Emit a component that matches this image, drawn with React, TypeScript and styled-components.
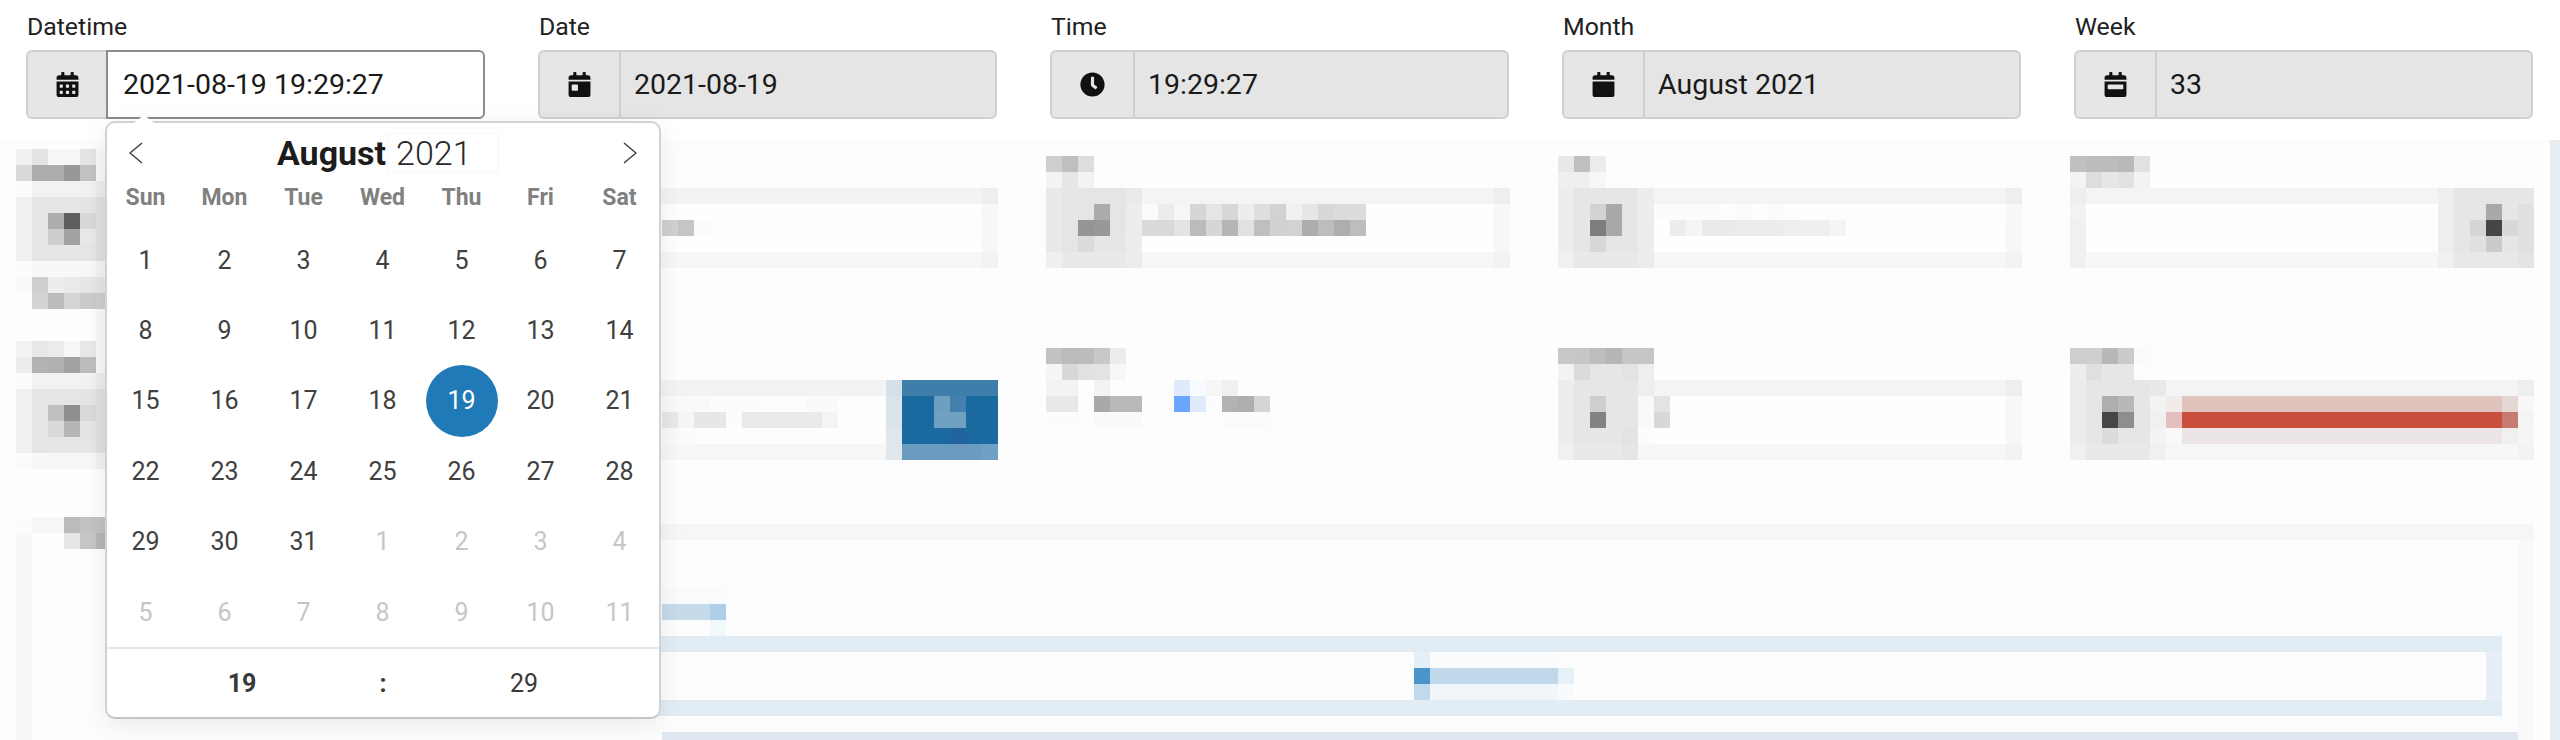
import React from "react";
import styled, { createGlobalStyle } from "styled-components";
import { FaCalendar, FaCalendarAlt, FaCalendarDay, FaCalendarWeek, FaClock } from "react-icons/fa";

const GlobalStyle = createGlobalStyle`
  html, body {
    margin: 0;
    padding: 0;
    background: #fff;
    overflow: hidden;
  }
  body {
    font-family: Roboto, "Liberation Sans", sans-serif;
    color: #212121;
  }
`;

const WEEKDAYS = ["Sun", "Mon", "Tue", "Wed", "Thu", "Fri", "Sat"];
const DAYS = [
  1, 2, 3, 4, 5, 6, 7, 8, 9, 10, 11, 12, 13, 14, 15, 16, 17, 18, 19, 20, 21,
  22, 23, 24, 25, 26, 27, 28, 29, 30, 31,
];
const NEXT_DAYS = [1, 2, 3, 4, 5, 6, 7, 8, 9, 10, 11];

// pixelated parts of the page. "f5" is a grey, "f5*3" repeats it, 6 digits is a full colour
const LEFT_FIELDS = [
  "f0 e4 f7 f6 e4 f8",
  "d9 ad ac 98 c2 f7",
  "fb f2 f2 f2 f2 ec",
  "f0 e5 e5 e5 e5 df",
  "f0 e5 ad 5e d8 df",
  "f0 e5 cd a2 e8 df",
  "f0 e5 e6 e6 e6 df",
  "fc f8 f8 f8 f8 f2",
  "fa cf ed ea e7 e5",
  "fd d3 bc d5 cb ce",
  "fe*5 f8",
  "fe*5 f8",
  "f3 e8 ec f7 e8 f8",
  "ed b2 b0 a1 bd f7",
  "fb f2 f2 f2 f2 ec",
  "f0 e5 e5 e5 e5 df",
  "f0 e5 c0 8e da df",
  "f0 e5 da b6 e5 df",
  "f0 e5 e6 e6 e6 df",
  "fb f7 f7 f7 f7 f0",
];

const DATE_FIELD = ["", "", "f3*28 ee", "fe*28 f7", "fd*8 d0 c6 fb fd*17 f7", "fe*28 f7", "f7*28 f2"];
const BLUE_FIELD = [
  "",
  "",
  "f3*22 d6e0e8 3f7eab*6",
  "fd*8 f9 f9 f9 fc fc fc fd fd fd fa fa fd*3 d9e3ea 1b6a9f*2 6d9fc1 4480ad 1b6a9f*2",
  "fd*8 e8 f6 e7 e7 fc ea*5 f4 fd*3 d9e3ea 1b6a9f*2 70a0c2*2 1b6a9f*2",
  "fd*8 f9 fc fd*12 dfe7ed 1b6a9f*3 22639b 1b6a9f*2",
  "f7*22 e0e8ee 6a9cc0*5 70a0c4",
];
const TIME_FIELD = [
  "cf bf dd",
  "f3 e6 f3",
  "e9 e5*4 ea f4*22 ee",
  "e9 e5 e5 ab e5 ed fb ec f6 d6 e5 d7 ed de d2 f0 e6 d8 dc dc fe*8 f7",
  "e9 e5 95 98 e5 ed d9 d9 e3 bb d6 b5 e1 bf d1 d2 ad bd ae bd fe*8 f7",
  "e9 e5 dc e6 e6 ed fe*22 f7",
  "ef e9*4 ec f7*22 f2",
];
const STATUS_FIELD = [
  "c2 bb bc c8 ec",
  "f5 d8 e1 e3 f7",
  "f3 f3 fd f3 fd*4 dfebfb f8fbff f6 f0",
  "e8 e8 fd a9 b9 b9 fd fd 6aa6ff dfebfb fc b2 ae d5",
  "fc fc fd fa fa fa fd*5 fb fb fb",
];
const MONTH_FIELD = [
  "e8 c0 ec",
  "ef ef f7",
  "ed e6*4 ed f4*22 ee",
  "ed e6 d2 a9 e6 ed fc fc fc fb fd fb fd fb fd*14 f7",
  "ed e6 7d a8 e6 ed fe ed f5 ea ea ec ec ec ee ef ef f5 fe*10 f7",
  "ed e6 d8 e6 e6 ed fe*22 f7",
  "f0 e9*4 ec f7*22 f2",
];
const RANGE_FIELD = [
  "c8 c6 bd b6 c6 c6",
  "f3 db e6 e6 e3 ee",
  "ed e6*4 ee f4*22 ee",
  "ed e6 ce e6 e6 f9 e3 fe*21 f7",
  "ed e6 83 e6 e6 f9 d8 fe*21 f7",
  "ed e6*3 e3 fc fe*22 f7",
  "f0 e9*3 e6 f7*23 f2",
];
const WEEK_FIELD = [
  "c0 bc bc b9 e2",
  "f3 dd e6 e2 f3",
  "ee f4*22 ee e6*5",
  "f2 fe*22 ee e6 e6 a8 e6 e0",
  "f0 fe*22 ee e6 d5 45 d8 e0",
  "f0 fe*22 ee e6 e0 cb e6 e0",
  "f0 f7*22 f0 e8*4 e4",
];
const ERROR_FIELD = [
  "ce cf b8 ca fb",
  "ed df e6 e6 fd",
  "ec e6*4 e9 f4*22 ee",
  "ec e6 ae b8 e6 f3 f1ebe9 e1c3be*20 e4d7d4 f7",
  "ec e6 46 8e e6 f0 e3bfbf c94e3c*20 c77c72 f4",
  "ec e6 dc e6 e6 f3 f9 ebe6e5*20 f0 f5",
  "f0 e9*4 f0 f7*22 f3",
];

// lower part of the page, in page coordinates: x, y, width, height, colour
const PANEL_ORIGIN = { x: 16, y: 517 };
const PANEL_TILES: [number, number, number, number, string][] = [
  [16, 517, 16, 16, "#fcfcfc"],
  [32, 517, 32, 16, "#f7f7f7"],
  [64, 517, 16, 16, "#bbb"],
  [80, 517, 32, 16, "#c2c2c2"],
  [16, 533, 16, 207, "#f8f8f8"],
  [64, 533, 16, 16, "#e6e6e6"],
  [80, 533, 16, 16, "#c6c6c6"],
  [96, 533, 16, 16, "#b5b5b5"],
  [112, 524, 2422, 16, "#f6f6f6"],
  [2518, 540, 16, 200, "#fafafa"],
  [662, 588, 64, 16, "#f9fbfc"],
  [662, 604, 48, 16, "#c5dbea"],
  [710, 604, 16, 16, "#b0cfe6"],
  [710, 620, 16, 16, "#f3f8fb"],
  [112, 636, 2390, 16, "#e2ecf5"],
  [112, 700, 2390, 16, "#e2ecf5"],
  [2486, 652, 16, 48, "#e6eff7"],
  [1414, 652, 16, 16, "#e4eff7"],
  [1430, 652, 128, 16, "#fafcfe"],
  [1414, 668, 16, 16, "#4a96cb"],
  [1430, 668, 128, 16, "#bfd8ea"],
  [1558, 668, 16, 16, "#e6f0f7"],
  [1414, 684, 16, 16, "#c0d9ec"],
  [1430, 684, 128, 16, "#f0f6fa"],
  [1558, 684, 16, 16, "#f8fafc"],
  [662, 732, 1856, 8, "#dfe8f1"],
];

const parseRow = (row: string) =>
  row
    .split(" ")
    .filter(Boolean)
    .flatMap((token) => {
      const [hex, count] = token.split("*");
      const colour = hex.length === 2 ? `#${hex}${hex}${hex}` : `#${hex}`;
      return Array<string>(Number(count || 1)).fill(colour);
    });

function Mosaic({ rows }: { rows: string[] }) {
  const parsed = rows.map(parseRow);
  const columns = Math.max(...parsed.map((r) => r.length));
  return (
    <MosaicSvg width={columns * 16} height={parsed.length * 16} shapeRendering="crispEdges">
      {parsed.map((row, y) =>
        row.map((fill, x) => <rect key={`${x}-${y}`} x={x * 16} y={y * 16} width={16} height={16} fill={fill} />)
      )}
    </MosaicSvg>
  );
}

function Chevron({ flip }: { flip?: boolean }) {
  return (
    <svg width="14" height="22" viewBox="0 0 14 22">
      <polyline
        points={flip ? "1,1 13,11 1,21" : "13,1 1,11 13,21"}
        fill="none"
        stroke="#3a3a3a"
        strokeWidth="1.4"
      />
    </svg>
  );
}

function Calendar() {
  return (
    <Popover>
      <NavRow>
        <Chevron />
        <MonthTitle>
          <MonthName>August</MonthName>
          <YearBox>2021</YearBox>
        </MonthTitle>
        <Chevron flip />
      </NavRow>
      <WeekRow>
        {WEEKDAYS.map((d) => (
          <WeekDay key={d}>{d}</WeekDay>
        ))}
      </WeekRow>
      <DayGrid>
        {DAYS.map((d) => (
          <DayCell key={d}>
            <Day $selected={d === 19}>{d}</Day>
          </DayCell>
        ))}
        {NEXT_DAYS.map((d) => (
          <DayCell key={`next-${d}`}>
            <Day $muted>{d}</Day>
          </DayCell>
        ))}
      </DayGrid>
      <TimeRow>
        <TimePart $bold>19</TimePart>
        <TimePart $bold>:</TimePart>
        <TimePart>29</TimePart>
      </TimeRow>
    </Popover>
  );
}

export default function App() {
  return (
    <Page>
      <GlobalStyle />
      <TopRow>
        <Field>
          <Label>Datetime</Label>
          <InputGroup>
            <Addon $width={80}>
              <FaCalendarAlt />
            </Addon>
            <InputBox $focused>2021-08-19 19:29:27</InputBox>
            <Calendar />
          </InputGroup>
        </Field>
        <Field>
          <Label>Date</Label>
          <InputGroup>
            <Addon>
              <FaCalendarDay />
            </Addon>
            <InputBox>2021-08-19</InputBox>
          </InputGroup>
        </Field>
        <Field>
          <Label>Time</Label>
          <InputGroup>
            <Addon $width={83}>
              <FaClock />
            </Addon>
            <InputBox>19:29:27</InputBox>
          </InputGroup>
        </Field>
        <Field>
          <Label>Month</Label>
          <InputGroup>
            <Addon>
              <FaCalendar />
            </Addon>
            <InputBox>August 2021</InputBox>
          </InputGroup>
        </Field>
        <Field>
          <Label>Week</Label>
          <InputGroup>
            <Addon>
              <FaCalendarWeek />
            </Addon>
            <InputBox>33</InputBox>
          </InputGroup>
        </Field>
      </TopRow>
      <Blurred>
        <BlurredMain>
          <BlurredGrid>
            <LeftColumn>
              <Mosaic rows={LEFT_FIELDS} />
            </LeftColumn>
            <BlurredColumn>
              <Mosaic rows={DATE_FIELD} />
              <Mosaic rows={BLUE_FIELD} />
            </BlurredColumn>
            <BlurredColumn>
              <Mosaic rows={TIME_FIELD} />
              <Mosaic rows={STATUS_FIELD} />
            </BlurredColumn>
            <BlurredColumn>
              <Mosaic rows={MONTH_FIELD} />
              <Mosaic rows={RANGE_FIELD} />
            </BlurredColumn>
            <BlurredColumn>
              <Mosaic rows={WEEK_FIELD} />
              <Mosaic rows={ERROR_FIELD} />
            </BlurredColumn>
          </BlurredGrid>
          <PanelSvg width={2518} height={223} shapeRendering="crispEdges">
            {PANEL_TILES.map(([x, y, w, h, fill]) => (
              <rect
                key={`${x}-${y}`}
                x={x - PANEL_ORIGIN.x}
                y={y - PANEL_ORIGIN.y}
                width={w}
                height={h}
                fill={fill}
              />
            ))}
          </PanelSvg>
        </BlurredMain>
        <EdgeStrip />
      </Blurred>
    </Page>
  );
}

const Page = styled.div`
  width: 2560px;
  height: 740px;
  overflow: hidden;
`;

const TopRow = styled.div`
  display: grid;
  grid-template-columns: repeat(5, 459px);
  column-gap: 53px;
  height: 140px;
  padding-left: 26px;
  box-sizing: border-box;
`;

const Field = styled.div`
  display: flex;
  flex-direction: column;
`;

const Label = styled.label`
  height: 50px;
  padding: 12px 0 0 1px;
  box-sizing: border-box;
  font-size: 24.8px;
  line-height: 30px;
  color: #212121;
`;

const InputGroup = styled.div`
  position: relative;
  display: flex;
  height: 69px;
`;

const Addon = styled.div<{ $width?: number }>`
  flex: 0 0 ${(p) => p.$width || 81}px;
  display: flex;
  align-items: center;
  justify-content: center;
  box-sizing: border-box;
  border: 2px solid #d0d0d0;
  border-right: 0;
  border-radius: 6px 0 0 6px;
  background: #e6e6e6;
  font-size: 25px;
  color: #111;
`;

const InputBox = styled.div<{ $focused?: boolean }>`
  flex: 1;
  display: flex;
  align-items: center;
  padding-left: ${(p) => (p.$focused ? 15 : 13)}px;
  box-sizing: border-box;
  border: 2px solid ${(p) => (p.$focused ? "#8c8c8c" : "#cfcfcf")};
  border-radius: 0 6px 6px 0;
  background: ${(p) => (p.$focused ? "#fff" : "#e5e5e5")};
  font-size: 28.5px;
  color: #1a1a1a;
`;

const Popover = styled.div`
  position: absolute;
  z-index: 5;
  top: 71px;
  left: 79px;
  width: 556px;
  height: 598px;
  box-sizing: border-box;
  display: flex;
  flex-direction: column;
  border: 2px solid #d2d2d2;
  border-bottom-color: #c4c4c4;
  border-radius: 10px;
  background: #fff;
  box-shadow: 0 6px 26px rgba(0, 0, 0, 0.08);

  &::before {
    content: "";
    position: absolute;
    top: -8px;
    left: 27px;
    border-style: solid;
    border-width: 0 10px 8px;
    border-color: transparent transparent #fff;
  }
`;

const NavRow = styled.div`
  flex: 0 0 59px;
  display: flex;
  align-items: center;
  justify-content: space-between;
  padding: 0 22px;
`;

const MonthTitle = styled.div`
  display: flex;
  align-items: center;
  margin-left: 10px;
  font-size: 34px;
`;

const MonthName = styled.span`
  font-weight: 700;
  color: #1c1c1c;
`;

const YearBox = styled.span`
  width: 112px;
  height: 40px;
  margin-left: 1px;
  padding-left: 8px;
  box-sizing: border-box;
  border: 1px solid #f7f7f7;
  font-weight: 300;
  line-height: 38px;
  color: #2a2a2a;
`;

const WeekRow = styled.div`
  flex: 0 0 30px;
  display: grid;
  grid-template-columns: repeat(7, 79px);
  margin: 1px 0 12px -1px;
`;

const WeekDay = styled.span`
  text-align: center;
  font-size: 23px;
  font-weight: 700;
  line-height: 30px;
  color: #808080;
`;

const DayGrid = styled.div`
  display: grid;
  grid-template-columns: repeat(7, 79px);
  grid-auto-rows: 70.4px;
  padding-left: 0;
  border-bottom: 2px solid #e6e6e6;
`;

const DayCell = styled.div`
  display: flex;
  align-items: center;
  justify-content: center;
  transform: translateX(-1px);
`;

const Day = styled.span<{ $selected?: boolean; $muted?: boolean }>`
  flex: 0 0 72px;
  height: 72px;
  display: flex;
  align-items: center;
  justify-content: center;
  border-radius: 50%;
  font-size: 25px;
  background: ${(p) => (p.$selected ? "#217ab8" : "transparent")};
  color: ${(p) => (p.$selected ? "#fff" : p.$muted ? "#c6c6c6" : "#404040")};
`;

const TimeRow = styled.div`
  flex: 1;
  display: grid;
  grid-template-columns: repeat(3, 141px);
  justify-content: center;
  align-items: center;
  justify-items: center;
`;

const TimePart = styled.span<{ $bold?: boolean }>`
  font-size: 25px;
  font-weight: ${(p) => (p.$bold ? 700 : 400)};
  color: #393939;
`;

const Blurred = styled.div`
  display: flex;
  height: 600px;
  background: #fdfdfd;
`;

const BlurredMain = styled.div`
  flex: 0 0 2550px;
  padding-left: 16px;
  box-sizing: border-box;
`;

const BlurredGrid = styled.div`
  display: grid;
  grid-template-columns: 518px 512px 512px 512px 480px;
  height: 329px;
  margin-bottom: 48px;
`;

const LeftColumn = styled.div`
  padding-top: 9px;
`;

const BlurredColumn = styled.div`
  display: flex;
  flex-direction: column;
  gap: 80px;
  padding-top: 16px;
`;

const MosaicSvg = styled.svg`
  display: block;
`;

const PanelSvg = styled.svg`
  display: block;
`;

const EdgeStrip = styled.div`
  flex: 1;
  background: #e8edf2;
`;
